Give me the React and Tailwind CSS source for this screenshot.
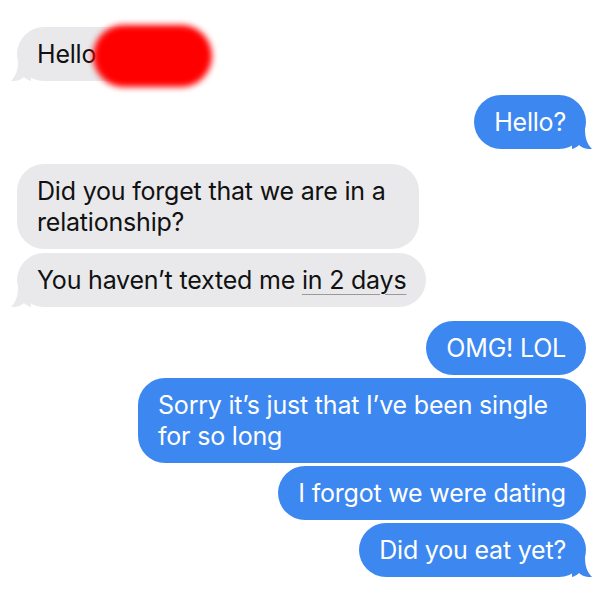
import React from 'react';

const GRAY = 'bg-[#e9e9eb]';
const BLUE = 'bg-[#3d87f0]';

// little curled tail under the last bubble of a group
const Tail = ({ side }) => (
  <svg
    width="20"
    height="20"
    viewBox="0 0 20 20"
    className={
      side === 'left'
        ? 'absolute -left-[6px] bottom-0 text-[#e9e9eb]'
        : 'absolute -right-[6px] bottom-0 -scale-x-100 text-[#3d87f0]'
    }
  >
    <path d="M7 0 C7 9 5 15 0 20 C5 20.5 10 19 13 16 C15 18 18 19.5 20 20 L20 0 Z" fill="currentColor" />
  </svg>
);

const Bubble = ({ me, tail, className = '', children }) => (
  <div
    className={`relative rounded-[27px] px-[20px] py-[11.5px] text-[25px] leading-[31px] tracking-[-0.2px] ${
      me ? `${BLUE} text-white self-end` : `${GRAY} text-[#111] self-start`
    } ${className}`}
  >
    {tail && <Tail side={me ? 'right' : 'left'} />}
    <span className="relative">{children}</span>
  </div>
);

export default function App() {
  return (
    <div
      className="w-[600px] h-[600px] bg-white relative overflow-hidden"
      style={{ fontFamily: 'Inter, "Liberation Sans", sans-serif' }}
    >
      <div className="flex flex-col pl-[17px] pr-[14px] pt-[27px]">
        <Bubble tail className="w-[190px]">Hello</Bubble>

        <Bubble me tail className="mt-[14px]">Hello?</Bubble>

        <Bubble className="mt-[15px] max-w-[402px]">Did you forget that we are in a relationship?</Bubble>
        <Bubble tail className="mt-[4px]">
          You haven’t texted me{' '}
          <span className="underline decoration-[#9a9a9a] decoration-1 underline-offset-[5px]">in 2 days</span>
        </Bubble>

        <Bubble me className="mt-[14px]">OMG! LOL</Bubble>
        <Bubble me className="mt-[3px] max-w-[448px]">Sorry it’s just that I’ve been single for so long</Bubble>
        <Bubble me className="mt-[3px]">I forgot we were dating</Bubble>
        <Bubble me tail className="mt-[3px]">Did you eat yet?</Bubble>
      </div>

      {/* redacted name */}
      <div className="absolute left-[93px] top-[25px] w-[119px] h-[62px] rounded-full bg-[#ff0000] blur-[3px]" />
    </div>
  );
}
